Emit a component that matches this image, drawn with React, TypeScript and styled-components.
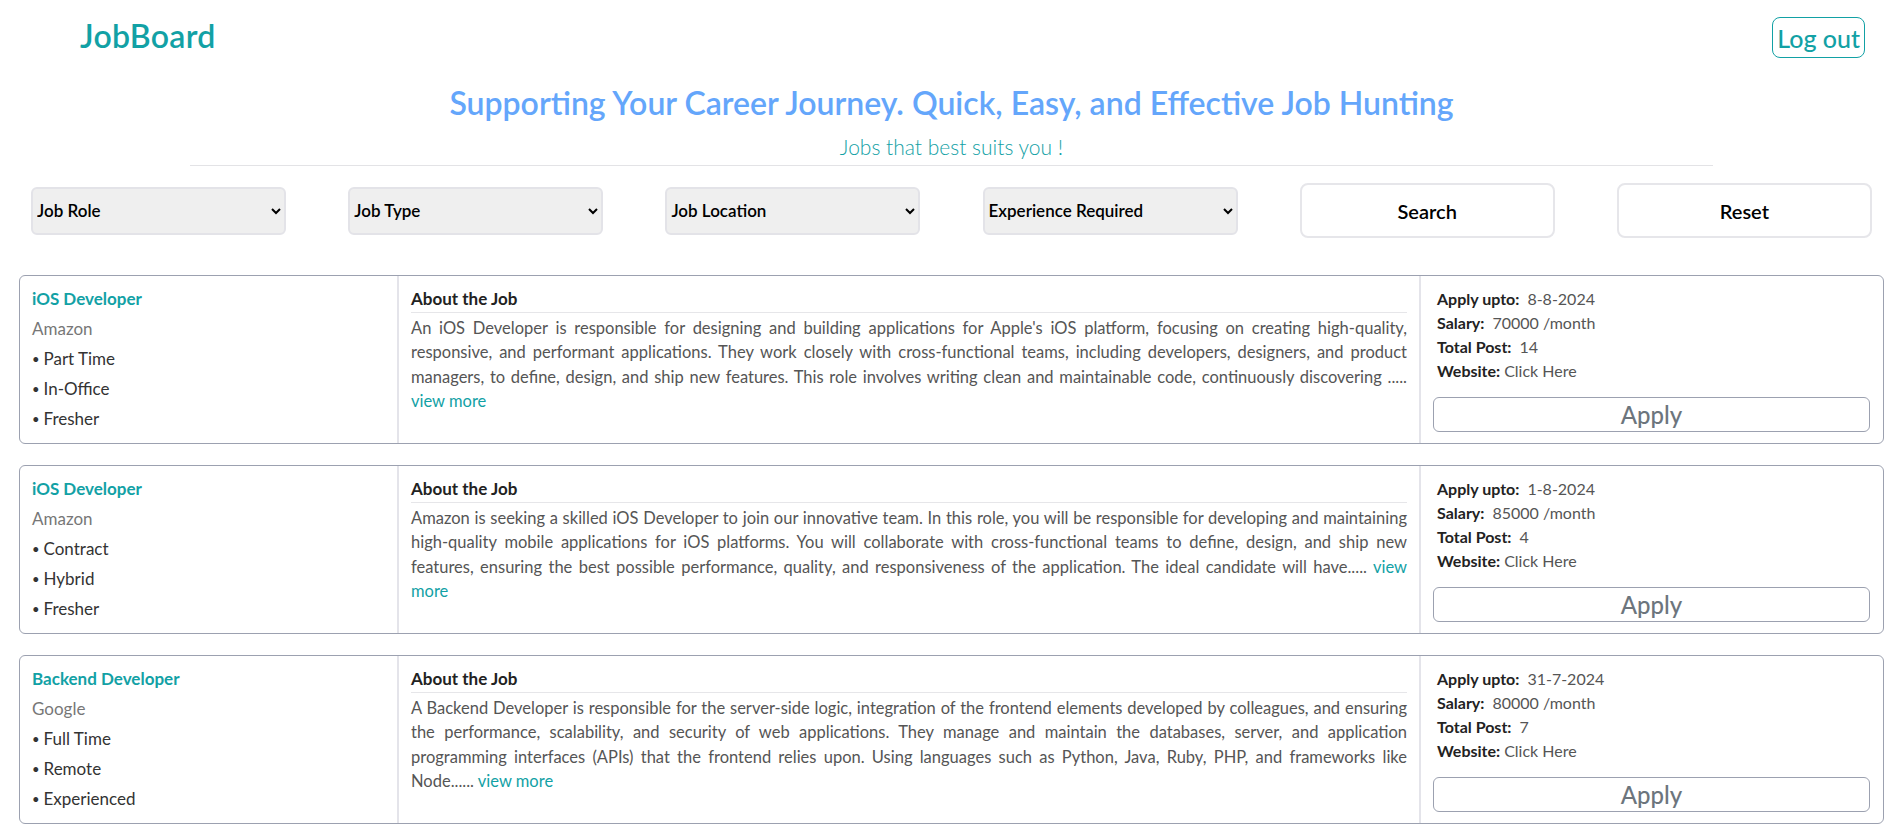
import React from "react";
import styled, { createGlobalStyle } from "styled-components";

const TEAL = "#12a1a5";
const FONT = `"Lato", "Noto Sans", "DejaVu Sans", sans-serif`;

const GlobalStyle = createGlobalStyle`
  html, body { margin: 0; padding: 0; background: #ffffff; }
  body { font-family: ${FONT}; color: #222; }
  * { box-sizing: border-box; }
`;

const Page = styled.div`
  display: flex;
  flex-direction: column;
  padding-bottom: 12px;
`;

const Header = styled.header`
  display: flex;
  align-items: center;
  justify-content: space-between;
  padding: 17px 38px 0 80px;
`;

const Brand = styled.div`
  align-self: flex-start;
  font-size: 32px;
  line-height: 38px;
  font-weight: 600;
  color: ${TEAL};
  letter-spacing: 0.3px;
`;

const LogoutButton = styled.button`
  height: 41px;
  padding: 0 4px;
  border: 1px solid ${TEAL};
  border-radius: 8px;
  background: #fff;
  color: ${TEAL};
  font-family: ${FONT};
  font-size: 25px;
  font-weight: 500;
  cursor: pointer;
`;

const Hero = styled.section`
  display: flex;
  flex-direction: column;
  align-items: center;
  margin-top: 27px;
`;

const Headline = styled.h1`
  margin: 0;
  font-size: 32px;
  line-height: 36px;
  font-weight: 600;
  color: #64a6fb;
`;

const Tagline = styled.p`
  margin: 14px 0 0;
  font-size: 21px;
  line-height: 24px;
  font-weight: 300;
  color: ${TEAL};
`;

const Divider = styled.hr`
  width: 80%;
  margin: 6px 0 0;
  border: none;
  border-top: 1px solid #e3e3e6;
`;

const Filters = styled.div`
  display: flex;
  justify-content: space-around;
  align-items: center;
  margin-top: 17px;
`;

const FilterSelect = styled.select`
  width: 255px;
  height: 48px;
  padding: 0;
  border: 2px solid #e3e3e8;
  border-radius: 6px;
  background-color: #efefef;
  color: #000;
  font-family: ${FONT};
  font-size: 17px;
  font-weight: 600;
`;

const ActionButton = styled.button`
  width: 255px;
  height: 55px;
  border: 2px solid #e6e6ea;
  border-radius: 8px;
  background: #fff;
  color: #000;
  font-family: ${FONT};
  font-size: 20px;
  font-weight: 600;
  cursor: pointer;
`;

const JobList = styled.main`
  display: flex;
  flex-direction: column;
  gap: 21px;
  margin: 37px 19px 0;
`;

const Card = styled.article`
  display: grid;
  grid-template-columns: 377px 1fr 464px;
  border: 1px solid #9ca1b0;
  border-radius: 6px;
  background: #fff;
`;

const SummaryCol = styled.div`
  display: flex;
  flex-direction: column;
  gap: 6px;
  padding: 11px 12px 11px;
`;

const JobTitle = styled.div`
  font-size: 17px;
  line-height: 24px;
  font-weight: 700;
  color: ${TEAL};
`;

const Company = styled.div`
  font-size: 17px;
  line-height: 24px;
  color: #777;
`;

const Tag = styled.div`
  font-size: 17px;
  line-height: 24px;
  color: #333;
`;

const Bullet = styled.span`
  font-size: 13px;
  margin-right: 4px;
  vertical-align: 1px;
`;

const AboutCol = styled.div`
  display: flex;
  flex-direction: column;
  padding: 11px 12px 11px;
  border-left: 2px solid #e4e4ea;
`;

const AboutTitle = styled.div`
  font-size: 17px;
  line-height: 24px;
  font-weight: 700;
  color: #222;
  padding-bottom: 1px;
  border-bottom: 1px solid #e6e6e9;
`;

const Description = styled.p`
  margin: 3px 0 0;
  font-size: 16.5px;
  line-height: 24.3px;
  color: #555;
  text-align: justify;
`;

const ViewMore = styled.a`
  color: ${TEAL};
  text-decoration: none;
  cursor: pointer;
`;

const DetailsCol = styled.div`
  display: flex;
  flex-direction: column;
  padding: 11px 13px 11px 12px;
  border-left: 2px solid #e4e4ea;
`;

const DetailList = styled.div`
  display: flex;
  flex-direction: column;
  padding-left: 4px;
`;

const DetailRow = styled.div`
  font-size: 16px;
  line-height: 24px;
  color: #555;
`;

const DetailLabel = styled.span`
  font-weight: 700;
  color: #222;
`;

const DetailValue = styled.span<{ $gap: number }>`
  margin-left: ${(p) => p.$gap}px;
`;

const ApplyButton = styled.button`
  margin-top: 14px;
  height: 35px;
  width: 100%;
  border: 1px solid #9ca1b0;
  border-radius: 6px;
  background: #fff;
  color: #6c757d;
  font-family: ${FONT};
  font-size: 24px;
  font-weight: 500;
  line-height: 1;
  cursor: pointer;
`;

type Job = {
  title: string;
  company: string;
  tags: string[];
  desc: string;
  applyUpto: string;
  salary: string;
  posts: string;
};

const jobs: Job[] = [
  {
    title: "iOS Developer",
    company: "Amazon",
    tags: ["Part Time", "In-Office", "Fresher"],
    desc: "An iOS Developer is responsible for designing and building applications for Apple's iOS platform, focusing on creating high-quality, responsive, and performant applications. They work closely with cross-functional teams, including developers, designers, and product managers, to define, design, and ship new features. This role involves writing clean and maintainable code, continuously discovering .....",
    applyUpto: "8-8-2024",
    salary: "70000 /month",
    posts: "14",
  },
  {
    title: "iOS Developer",
    company: "Amazon",
    tags: ["Contract", "Hybrid", "Fresher"],
    desc: "Amazon is seeking a skilled iOS Developer to join our innovative team. In this role, you will be responsible for developing and maintaining high-quality mobile applications for iOS platforms. You will collaborate with cross-functional teams to define, design, and ship new features, ensuring the best possible performance, quality, and responsiveness of the application. The ideal candidate will have.....",
    applyUpto: "1-8-2024",
    salary: "85000 /month",
    posts: "4",
  },
  {
    title: "Backend Developer",
    company: "Google",
    tags: ["Full Time", "Remote", "Experienced"],
    desc: "A Backend Developer is responsible for the server-side logic, integration of the frontend elements developed by colleagues, and ensuring the performance, scalability, and security of web applications. They manage and maintain the databases, server, and application programming interfaces (APIs) that the frontend relies upon. Using languages such as Python, Java, Ruby, PHP, and frameworks like Node......",
    applyUpto: "31-7-2024",
    salary: "80000 /month",
    posts: "7",
  },
];

const filters = ["Job Role", "Job Type", "Job Location", "Experience Required"];

function JobCard({ job }: { job: Job }) {
  return (
    <Card>
      <SummaryCol>
        <JobTitle>{job.title}</JobTitle>
        <Company>{job.company}</Company>
        {job.tags.map((t) => (
          <Tag key={t}>
            <Bullet>•</Bullet>
            {t}
          </Tag>
        ))}
      </SummaryCol>
      <AboutCol>
        <AboutTitle>About the Job</AboutTitle>
        <Description>
          {job.desc} <ViewMore>view more</ViewMore>
        </Description>
      </AboutCol>
      <DetailsCol>
        <DetailList>
          <DetailRow>
            <DetailLabel>Apply upto:</DetailLabel>
            <DetailValue $gap={8}>{job.applyUpto}</DetailValue>
          </DetailRow>
          <DetailRow>
            <DetailLabel>Salary:</DetailLabel>
            <DetailValue $gap={8}>{job.salary}</DetailValue>
          </DetailRow>
          <DetailRow>
            <DetailLabel>Total Post:</DetailLabel>
            <DetailValue $gap={8}>{job.posts}</DetailValue>
          </DetailRow>
          <DetailRow>
            <DetailLabel>Website:</DetailLabel>
            <DetailValue $gap={4}>Click Here</DetailValue>
          </DetailRow>
        </DetailList>
        <ApplyButton>Apply</ApplyButton>
      </DetailsCol>
    </Card>
  );
}

export default function App() {
  return (
    <>
      <GlobalStyle />
      <Page>
        <Header>
          <Brand>JobBoard</Brand>
          <LogoutButton>Log out</LogoutButton>
        </Header>
        <Hero>
          <Headline>Supporting Your Career Journey. Quick, Easy, and Effective Job Hunting</Headline>
          <Tagline>Jobs that best suits you !</Tagline>
          <Divider />
        </Hero>
        <Filters>
          {filters.map((f) => (
            <FilterSelect key={f} defaultValue="">
              <option value="">{f}</option>
            </FilterSelect>
          ))}
          <ActionButton>Search</ActionButton>
          <ActionButton>Reset</ActionButton>
        </Filters>
        <JobList>
          {jobs.map((j, i) => (
            <JobCard key={i} job={j} />
          ))}
        </JobList>
      </Page>
    </>
  );
}
